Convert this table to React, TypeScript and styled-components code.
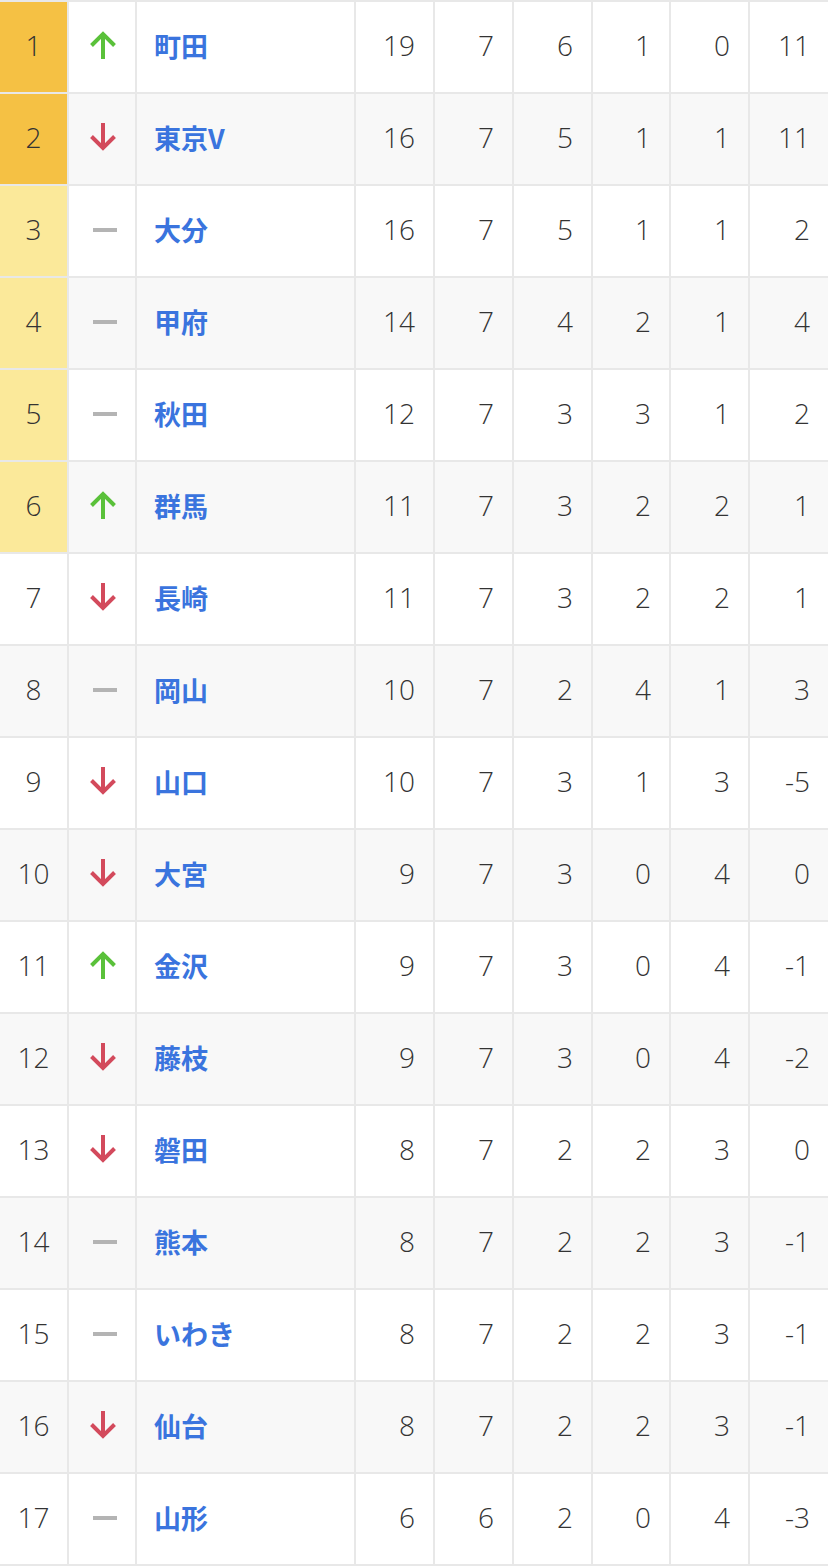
import React from "react";
import styled, { createGlobalStyle } from "styled-components";

const GlobalStyle = createGlobalStyle`
  html, body { margin: 0; padding: 0; background: #ffffff; }
  body { font-family: "Noto Sans CJK JP", "Noto Sans", sans-serif; }
`;

type Trend = "up" | "down" | "same";
type Team = {
  rank: number;
  trend: Trend;
  name: string;
  pts: number;
  games: number;
  win: number;
  draw: number;
  loss: number;
  diff: number;
};

const teams: Team[] = [
  { rank: 1, trend: "up", name: "町田", pts: 19, games: 7, win: 6, draw: 1, loss: 0, diff: 11 },
  { rank: 2, trend: "down", name: "東京V", pts: 16, games: 7, win: 5, draw: 1, loss: 1, diff: 11 },
  { rank: 3, trend: "same", name: "大分", pts: 16, games: 7, win: 5, draw: 1, loss: 1, diff: 2 },
  { rank: 4, trend: "same", name: "甲府", pts: 14, games: 7, win: 4, draw: 2, loss: 1, diff: 4 },
  { rank: 5, trend: "same", name: "秋田", pts: 12, games: 7, win: 3, draw: 3, loss: 1, diff: 2 },
  { rank: 6, trend: "up", name: "群馬", pts: 11, games: 7, win: 3, draw: 2, loss: 2, diff: 1 },
  { rank: 7, trend: "down", name: "長崎", pts: 11, games: 7, win: 3, draw: 2, loss: 2, diff: 1 },
  { rank: 8, trend: "same", name: "岡山", pts: 10, games: 7, win: 2, draw: 4, loss: 1, diff: 3 },
  { rank: 9, trend: "down", name: "山口", pts: 10, games: 7, win: 3, draw: 1, loss: 3, diff: -5 },
  { rank: 10, trend: "down", name: "大宮", pts: 9, games: 7, win: 3, draw: 0, loss: 4, diff: 0 },
  { rank: 11, trend: "up", name: "金沢", pts: 9, games: 7, win: 3, draw: 0, loss: 4, diff: -1 },
  { rank: 12, trend: "down", name: "藤枝", pts: 9, games: 7, win: 3, draw: 0, loss: 4, diff: -2 },
  { rank: 13, trend: "down", name: "磐田", pts: 8, games: 7, win: 2, draw: 2, loss: 3, diff: 0 },
  { rank: 14, trend: "same", name: "熊本", pts: 8, games: 7, win: 2, draw: 2, loss: 3, diff: -1 },
  { rank: 15, trend: "same", name: "いわき", pts: 8, games: 7, win: 2, draw: 2, loss: 3, diff: -1 },
  { rank: 16, trend: "down", name: "仙台", pts: 8, games: 7, win: 2, draw: 2, loss: 3, diff: -1 },
  { rank: 17, trend: "same", name: "山形", pts: 6, games: 6, win: 2, draw: 0, loss: 4, diff: -3 },
];

const BORDER = "#e8e8e8";

const Table = styled.table`
  width: 828px;
  border-collapse: separate;
  border-spacing: 0;
  table-layout: fixed;
  border-top: 2px solid ${BORDER};
  font-family: "Open Sans", "Noto Sans", sans-serif;
  font-weight: 300;
  font-size: 28px;
  color: #333333;
`;

const Row = styled.tr<{ $striped: boolean }>`
  background: ${(p) => (p.$striped ? "#f8f8f8" : "#ffffff")};
`;

const Cell = styled.td`
  box-sizing: border-box;
  height: 92px;
  padding: 0 0 4px 0;
  border-bottom: 2px solid ${BORDER};
  border-right: 2px solid ${BORDER};
  vertical-align: middle;
  &:last-child { border-right: none; }
`;

const RankCell = styled(Cell)<{ $zone: "top" | "promo" | "none" }>`
  width: 69px;
  text-align: center;
  background: ${(p) =>
    p.$zone === "top" ? "#f5c144" : p.$zone === "promo" ? "#fbe99a" : "transparent"};
`;

const TrendCell = styled(Cell)`
  width: 68px;
  padding-left: 5px;
  text-align: center;
  line-height: 0;
`;

const NameCell = styled(Cell)`
  width: 219px;
  padding-left: 17px;
  font-family: "Noto Sans CJK JP", "Noto Sans", sans-serif;
  font-weight: 700;
  color: #3a74de;
  font-size: 27px;
`;

const NumCell = styled(Cell)<{ $w: number }>`
  width: ${(p) => p.$w}px;
  text-align: right;
  padding-right: 18px;
`;

const Dash = styled.span`
  display: inline-block;
  width: 24px;
  height: 4px;
  background: #b4b4b4;
  vertical-align: middle;
`;

const TrendIcon: React.FC<{ trend: Trend }> = ({ trend }) => {
  if (trend === "same") return <Dash />;
  const up = trend === "up";
  const color = up ? "#5ac13a" : "#d34a5c";
  return (
    <svg width="28" height="28" viewBox="0 0 28 28" style={{ display: "inline-block", verticalAlign: "middle", marginLeft: "-3px" }}>
      <g
        stroke={color}
        strokeWidth={4}
        fill="none"
        strokeLinecap="butt"
        strokeLinejoin="miter"
        transform={up ? undefined : "rotate(180 14 14)"}
      >
        <path d="M14 3 V28" />
        <path d="M2.5 14.5 L14 3 L25.5 14.5" />
      </g>
    </svg>
  );
};

const widths = [79, 79, 79, 78, 79, 78];

export default function App() {
  return (
    <>
      <GlobalStyle />
      <Table>
        <tbody>
          {teams.map((t, i) => {
            const nums = [t.pts, t.games, t.win, t.draw, t.loss, t.diff];
            return (
              <Row key={t.rank} $striped={i % 2 === 1}>
                <RankCell $zone={t.rank <= 2 ? "top" : t.rank <= 6 ? "promo" : "none"}>{t.rank}</RankCell>
                <TrendCell>
                  <TrendIcon trend={t.trend} />
                </TrendCell>
                <NameCell>{t.name}</NameCell>
                {nums.map((n, j) => (
                  <NumCell key={j} $w={widths[j]}>
                    {n}
                  </NumCell>
                ))}
              </Row>
            );
          })}
        </tbody>
      </Table>
    </>
  );
}
